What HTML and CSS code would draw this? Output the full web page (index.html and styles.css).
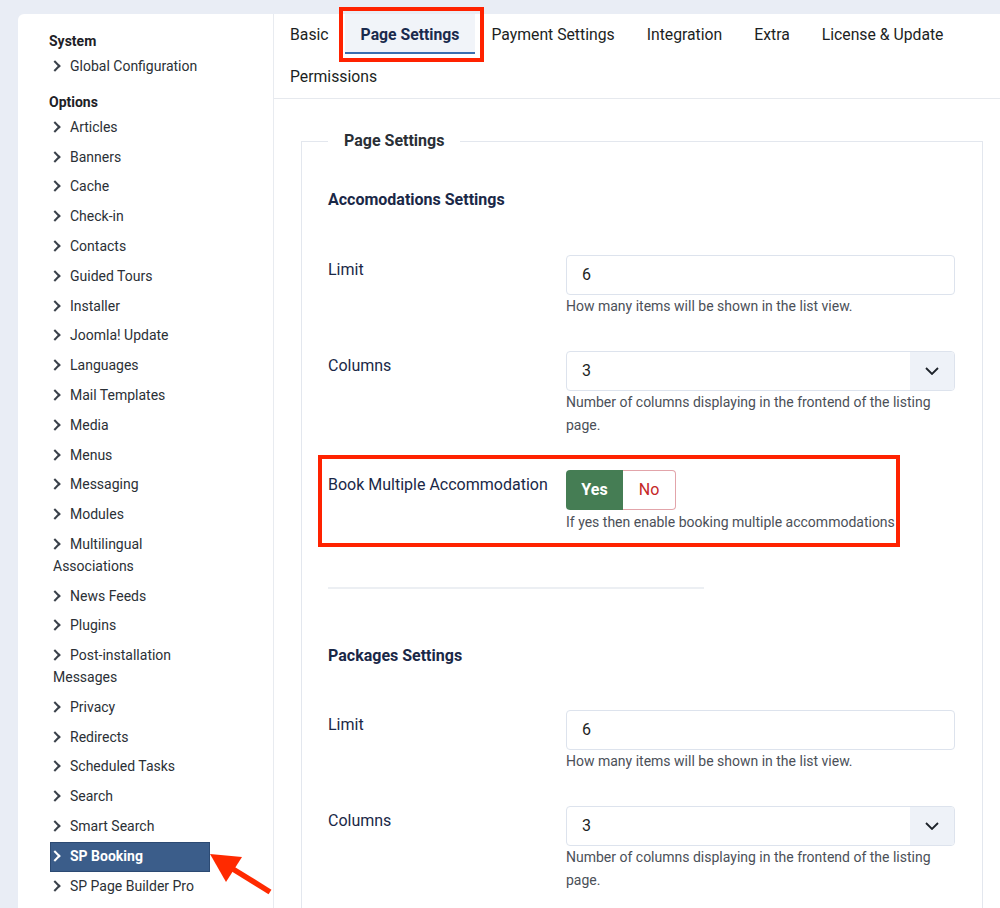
FILE: index.html
```html
<!DOCTYPE html>
<html lang="en">
<head>
  <meta charset="UTF-8">
  <meta name="viewport" content="width=device-width, initial-scale=1.0">
  <title>Options: SP Booking</title>
  <link rel="stylesheet" href="styles.css">
</head>
<body>
  <div class="card">
    <!-- Component list -->
    <nav class="sidebar">
      <div class="side-title">System</div>
      <ul class="side-list">
        <li><span class="chev"></span>Global Configuration</li>
      </ul>
      <div class="side-title options">Options</div>
      <ul class="side-list">
        <li><span class="chev"></span>Articles</li>
        <li><span class="chev"></span>Banners</li>
        <li><span class="chev"></span>Cache</li>
        <li><span class="chev"></span>Check-in</li>
        <li><span class="chev"></span>Contacts</li>
        <li><span class="chev"></span>Guided Tours</li>
        <li><span class="chev"></span>Installer</li>
        <li><span class="chev"></span>Joomla! Update</li>
        <li><span class="chev"></span>Languages</li>
        <li><span class="chev"></span>Mail Templates</li>
        <li><span class="chev"></span>Media</li>
        <li><span class="chev"></span>Menus</li>
        <li><span class="chev"></span>Messaging</li>
        <li><span class="chev"></span>Modules</li>
        <li><span class="chev"></span>Multilingual Associations</li>
        <li><span class="chev"></span>News Feeds</li>
        <li><span class="chev"></span>Plugins</li>
        <li><span class="chev"></span>Post-installation Messages</li>
        <li><span class="chev"></span>Privacy</li>
        <li><span class="chev"></span>Redirects</li>
        <li><span class="chev"></span>Scheduled Tasks</li>
        <li><span class="chev"></span>Search</li>
        <li><span class="chev"></span>Smart Search</li>
        <li class="active"><span class="chev"></span>SP Booking</li>
        <li><span class="chev"></span>SP Page Builder Pro</li>
      </ul>
    </nav>

    <main class="content">
      <div class="tabs">
        <div class="tab">Basic</div>
        <div class="tab active marked">Page Settings</div>
        <div class="tab">Payment Settings</div>
        <div class="tab">Integration</div>
        <div class="tab">Extra</div>
        <div class="tab">License &amp; Update</div>
        <div class="tab">Permissions</div>
      </div>

      <div class="pane">
        <fieldset class="options-form">
          <legend>Page Settings</legend>

          <h3 class="group-title">Accomodations Settings</h3>

          <div class="control-group">
            <div class="control-label">Limit</div>
            <div class="controls">
              <div class="input">6</div>
              <div class="help">How many items will be shown in the list view.</div>
            </div>
          </div>

          <div class="control-group">
            <div class="control-label">Columns</div>
            <div class="controls">
              <div class="select"><span>3</span><span class="caret"><svg width="14" height="8" viewBox="0 0 14 8"><path d="M1 1l6 6 6-6" fill="none" stroke="#1d232a" stroke-width="1.8"/></svg></span></div>
              <div class="help">Number of columns displaying in the frontend of the listing page.</div>
            </div>
          </div>

          <div class="control-group marked">
            <div class="control-label">Book Multiple Accommodation</div>
            <div class="controls">
              <div class="switcher">
                <span class="yes">Yes</span><span class="no">No</span>
              </div>
              <div class="help">If yes then enable booking multiple accommodations</div>
            </div>
          </div>

          <hr class="spacer">

          <h3 class="group-title">Packages Settings</h3>

          <div class="control-group">
            <div class="control-label">Limit</div>
            <div class="controls">
              <div class="input">6</div>
              <div class="help">How many items will be shown in the list view.</div>
            </div>
          </div>

          <div class="control-group">
            <div class="control-label">Columns</div>
            <div class="controls">
              <div class="select"><span>3</span><span class="caret"><svg width="14" height="8" viewBox="0 0 14 8"><path d="M1 1l6 6 6-6" fill="none" stroke="#1d232a" stroke-width="1.8"/></svg></span></div>
              <div class="help">Number of columns displaying in the frontend of the listing page.</div>
            </div>
          </div>
        </fieldset>
      </div>
    </main>
  </div>

  <!-- annotation arrow pointing at SP Booking -->
  <svg class="arrow" width="80" height="60" viewBox="0 0 80 60">
    <line x1="70" y1="52" x2="28" y2="26" stroke="#ff2a00" stroke-width="5.5"/>
    <polygon points="10,14 42,17 26,42" fill="#ff2a00"/>
  </svg>
</body>
</html>
```
FILE: styles.css
```css
body {
  margin: 0;
  background: #e9edf5;
  font-family: Roboto, "Liberation Sans", sans-serif;
  color: #22262a;
  position: relative;
  height: 908px;
  overflow: hidden;
}
.card {
  display: flex;
  margin: 14px 0 0 18px;
  background: #fff;
  border-top-left-radius: 6px;
  min-height: 894px;
}

/* sidebar */
.sidebar {
  width: 224px;
  padding: 16px 0 0 31px;
  border-right: 1px solid #e8ebf0;
  font-size: 14px;
}
.side-title {
  font-weight: bold;
  line-height: 22px;
  color: #1d2126;
}
.side-title.options {
  margin-top: 9px;
}
.side-list {
  list-style: none;
  margin: 0 0 0 1px;
  padding: 0;
  width: 160px;
}
.side-list li {
  padding: 4px 0 4px 3px;
  line-height: 21.8px;
  color: #2b3036;
  box-sizing: border-box;
}
.chev {
  display: inline-block;
  width: 6px;
  height: 6px;
  border-right: 2.2px solid #3a414a;
  border-top: 2.2px solid #3a414a;
  transform: rotate(45deg);
  margin: 0 11px 1px -2px;
}
.side-list li.active {
  background: #3b5d8a;
  border: 1px solid #2c4a73;
  color: #fff;
  font-weight: bold;
  padding: 3px 0 3px 2px;
}
.side-list li.active .chev {
  border-color: #fff;
}

/* tabs */
.content {
  flex: 1;
}
.tabs {
  display: flex;
  flex-wrap: wrap;
  border-bottom: 1px solid #e6e9ee;
}
.tab {
  padding: 9px 16px;
  line-height: 24px;
  font-size: 15.75px;
  color: #1c1f23;
  position: relative;
}
.tab.active {
  background: #f1f4f9;
  color: #1a2a4d;
  font-weight: bold;
  box-shadow: inset 0 -2px 0 #fff, inset 0 -4px 0 #3a6fb0;
}
.tab.marked::after {
  content: "";
  position: absolute;
  left: -6px;
  right: -9px;
  top: -7px;
  bottom: -6px;
  border: 4px solid #ff2200;
}

/* form */
.pane {
  padding: 30px 17px 0 27px;
}
.options-form {
  margin: 0;
  padding: 0 27px 0 26px;
  border: 1px solid #e3e7ee;
  min-height: 900px;
}
.options-form legend {
  padding: 0 16px;
  font-size: 16px;
  line-height: 24px;
  font-weight: bold;
  color: #2a2f36;
}
.group-title {
  margin: 35px 0 43px;
  font-size: 16px;
  line-height: 24px;
  color: #1a2847;
}
.control-group {
  display: flex;
  margin-bottom: 33px;
  position: relative;
}
.control-group.marked::after {
  content: "";
  position: absolute;
  left: -10px;
  top: -15px;
  bottom: -13px;
  right: 55px;
  border: 4px solid #ff2200;
  pointer-events: none;
}
.control-label {
  width: 238px;
  padding-top: 3px;
  font-size: 16px;
  line-height: 24px;
  color: #1a2847;
}
.controls {
  flex: 1;
}
.input, .select {
  height: 40px;
  box-sizing: border-box;
  border: 1px solid #dde3ed;
  border-radius: 4px;
  padding: 0 15px;
  font-size: 16px;
  line-height: 38px;
  color: #1c1f23;
}
.select {
  display: flex;
  justify-content: space-between;
  padding-right: 0;
  overflow: hidden;
}
.caret {
  width: 44px;
  background: #eef2f8;
  display: flex;
  align-items: center;
  justify-content: center;
}
.help {
  font-size: 14px;
  line-height: 23px;
  color: #4b5058;
}
.switcher {
  display: flex;
  height: 40px;
  font-size: 16px;
  line-height: 40px;
  margin-bottom: 1px;
}
.switcher .yes {
  width: 57px;
  background: #457d54;
  color: #fff;
  font-weight: bold;
  text-align: center;
  border-radius: 4px 0 0 4px;
}
.switcher .no {
  width: 52px;
  border: 1px solid #e2a4aa;
  border-left: 0;
  line-height: 38px;
  color: #c52827;
  text-align: center;
  border-radius: 0 4px 4px 0;
}
.spacer {
  width: 60%;
  margin: 53px 0 55px;
  border: 0;
  height: 2px;
  background: #eceff3;
}
.spacer + .group-title {
  margin-top: 0;
  margin-bottom: 42px;
}

.arrow {
  position: absolute;
  left: 200px;
  top: 840px;
}
```
